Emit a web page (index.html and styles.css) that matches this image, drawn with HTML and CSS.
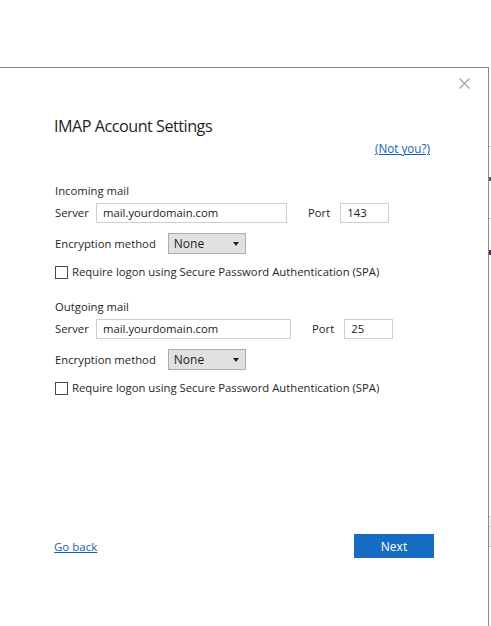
FILE: index.html
```html
<!DOCTYPE html>
<html>
<head>
<meta charset="utf-8">
<link rel="stylesheet" href="styles.css">
</head>
<body>
<div class="page">
  <div class="dialog">
    <div class="closebar">
      <svg class="close" width="11" height="11" viewBox="0 0 11 11"><path d="M0.5 0.5 L10.5 10.5 M10.5 0.5 L0.5 10.5" stroke="#a0a0a0" stroke-width="1.1" fill="none"/></svg>
    </div>
    <h1 class="title">IMAP Account Settings</h1>
    <div class="notyou"><a class="link" href="#">(Not you?)</a></div>

    <section class="group group-in">
      <div class="group-label">Incoming mail</div>
      <div class="row server-row">
        <span class="label server-label">Server</span>
        <span class="input server-in">mail.yourdomain.com</span>
        <span class="label port-label">Port</span>
        <span class="input port">143</span>
      </div>
      <div class="row enc-row">
        <span class="label">Encryption method</span>
        <span class="select">None<span class="arrow"></span></span>
      </div>
      <div class="row check-row">
        <span class="checkbox"></span>
        <span class="label">Require logon using Secure Password Authentication (SPA)</span>
      </div>
    </section>

    <section class="group group-out">
      <div class="group-label">Outgoing mail</div>
      <div class="row server-row">
        <span class="label server-label">Server</span>
        <span class="input server-out">mail.yourdomain.com</span>
        <span class="label port-label">Port</span>
        <span class="input port">25</span>
      </div>
      <div class="row enc-row">
        <span class="label">Encryption method</span>
        <span class="select">None<span class="arrow"></span></span>
      </div>
      <div class="row check-row">
        <span class="checkbox"></span>
        <span class="label">Require logon using Secure Password Authentication (SPA)</span>
      </div>
    </section>

    <div class="footer">
      <a class="link goback" href="#">Go back</a>
      <button class="next">Next</button>
    </div>
  </div>
  <div class="behind"></div>
</div>
</body>
</html>
```

FILE: styles.css
```css
html, body {
  margin: 0;
  padding: 0;
  background: #ffffff;
}
body {
  font-family: "Open Sans", "Noto Sans", sans-serif;
  color: #1f1f1f;
  width: 491px;
  height: 626px;
  overflow: hidden;
}
.page {
  display: flex;
  padding-top: 67px;
  height: 559px;
}
.dialog {
  box-sizing: border-box;
  flex: 0 0 489px;
  width: 489px;
  border-top: 1px solid #8a8a8a;
  border-right: 1px solid #8a8a8a;
  padding: 0 54px 0 54px;
  display: flex;
  flex-direction: column;
}
.behind {
  width: 2px;
  background:
    linear-gradient(#d6d6d6, #d6d6d6) 0 79px / 2px 1px no-repeat,
    linear-gradient(#555, #555) 0 110px / 2px 4px no-repeat,
    linear-gradient(#d6d6d6, #d6d6d6) 0 151px / 2px 1px no-repeat,
    linear-gradient(#5a3050, #5a3050) 0 183px / 2px 5px no-repeat,
    linear-gradient(#d6d6d6, #d6d6d6) 0 449px / 2px 1px no-repeat,
    linear-gradient(#d6d6d6, #d6d6d6) 0 459px / 2px 1px no-repeat,
    linear-gradient(#c8c8c8, #c8c8c8) 0 479px / 2px 1px no-repeat,
    linear-gradient(#ededed, #ededed) 0 449px / 2px 31px no-repeat;
}
.closebar {
  display: flex;
  justify-content: flex-end;
  margin: 10px -36px 0 0;
  height: 11px;
}
.close { display: block; }
.title {
  margin: 26px 0 0 0;
  font-size: 16.2px;
  font-weight: 400;
  line-height: 22px;
  color: #1f1f1f;
  letter-spacing: -0.5px;
}
.notyou {
  display: flex;
  justify-content: flex-end;
  margin: 2px 4px 0 0;
  height: 18px;
  line-height: 18px;
}
.link {
  color: #1362b8;
  text-decoration: underline;
  font-size: 11.7px;
}
.group {
  font-size: 11.3px;
}
.group-in { margin-top: 26px; }
.group-out { margin-top: 20px; }
.group-label {
  line-height: 16px;
  height: 16px;
  margin-left: 1px;
}
.row {
  display: flex;
  align-items: center;
}
.label { white-space: nowrap; line-height: 16px; }
.server-row {
  margin-top: 4px;
  height: 20px;
  margin-left: 1px;
}
.server-label { width: 41px; }
.input {
  box-sizing: border-box;
  height: 20px;
  border: 1px solid #cfcfcf;
  padding: 0 6px;
  line-height: 18px;
  background: #fff;
  color: #202020;
}
.server-in { width: 191px; }
.server-out { width: 195px; }
.port-label { margin-left: 21px; }
.port { margin-left: 10px; width: 49px; }
.enc-row {
  margin-top: 10px;
  height: 21px;
  margin-left: 1px;
}
.select {
  box-sizing: border-box;
  margin-left: 12px;
  width: 78px;
  height: 21px;
  background: #e1e1e1;
  border: 1px solid #adadad;
  padding: 0 0 0 5px;
  font-size: 12px;
  line-height: 19px;
  display: flex;
  align-items: center;
  justify-content: space-between;
}
.arrow {
  width: 0;
  height: 0;
  border-left: 3.5px solid transparent;
  border-right: 3.5px solid transparent;
  border-top: 4px solid #202020;
  margin-right: 6px;
}
.check-row {
  margin-top: 11px;
  height: 14px;
  margin-left: 1px;
}
.checkbox {
  box-sizing: border-box;
  width: 13px;
  height: 13px;
  border: 1px solid #4a4a4a;
  background: #fff;
  margin-right: 4px;
}
.footer {
  margin-top: auto;
  margin-bottom: 68px;
  display: flex;
  justify-content: space-between;
  align-items: center;
}
.goback { font-size: 11.5px; }
.next {
  width: 80px;
  height: 24px;
  border: 0;
  background: #166cc3;
  color: #fff;
  font-family: "Open Sans", "Noto Sans", sans-serif;
  font-size: 12px;
  padding: 0;
}
```
